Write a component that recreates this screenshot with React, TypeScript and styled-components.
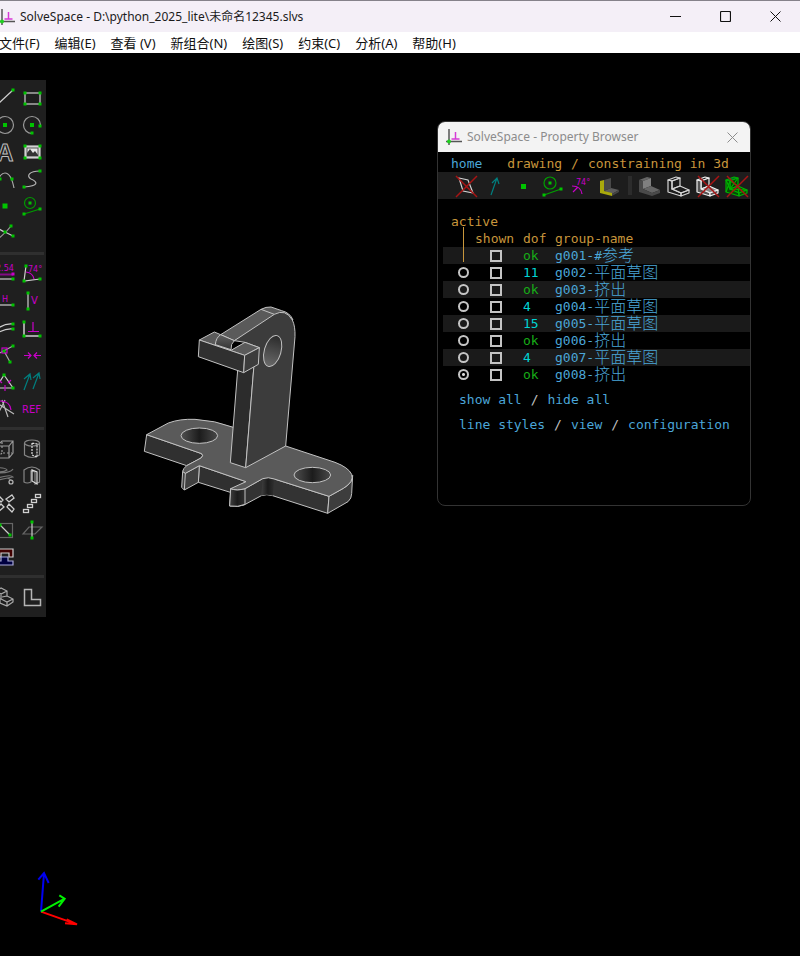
import React from "react";
import styled, { createGlobalStyle, css } from "styled-components";

const WHITE = "#cfcfcf";
const GREEN = "#00c400";
const MAGENTA = "#c800c8";
const TEAL = "#007f7f";
const RED = "#a81414";
const LINK = "#4ba6d8";
const AMBER = "#c8963c";

const GlobalStyle = createGlobalStyle`
  * { box-sizing: border-box; }
  body { margin: 0; background: #000; }
  button, input, table { font: inherit; color: inherit; }
`;

const AppWindow = styled.div`
  display: flex;
  flex-direction: column;
  min-height: 100vh;
  overflow: hidden;
  background: #000;
  font-family: "Noto Sans", "Noto Sans CJK SC", sans-serif;
  font-size: 12px;
`;

const TitleBar = styled.header`
  display: flex;
  align-items: center;
  height: 32px;
  border-top: 1px solid #85828a;
  background: #f4eff7;
  color: #1b1b1b;
`;

const AppMark = styled.svg`
  flex: none;
  width: 18px;
  height: 18px;
  margin-left: -2px;
`;

const WindowTitle = styled.h1`
  flex: 1;
  margin: 0 0 0 4px;
  font-size: 12px;
  font-weight: 400;
  line-height: 16px;
  white-space: nowrap;
`;

const PlainButton = styled.button`
  display: flex;
  align-items: center;
  justify-content: center;
  padding: 0;
  border: 0;
  background: none;
`;

const WindowControl = styled(PlainButton)`
  width: 50px;
  height: 31px;
`;

const MenuBar = styled.nav`
  display: flex;
  align-items: center;
  gap: 15px;
  height: 21px;
  margin-left: -1px;
  background: #fff;
  color: #111;
  font-size: 13px;
`;

const MenuItem = styled(PlainButton)`
  line-height: 20px;
  white-space: nowrap;
`;

const Canvas = styled.main`
  position: relative;
  display: flex;
  align-items: flex-start;
  flex: 1;
  padding-top: 27px;
  background: #000;
`;

const ToolPalette = styled.aside`
  display: flex;
  flex-direction: column;
  gap: 5px;
  width: 54px;
  margin-left: -8px;
  padding: 5px 0 7px;
  background: #1f1f1f;
`;

const ToolGroup = styled.div`
  display: grid;
  grid-template-columns: 27px 27px;
  grid-auto-rows: 27px;
`;

const PaletteRule = styled.hr`
  width: 52px;
  height: 3px;
  margin: 0;
  border: 0;
  background: #2f2f2f;
`;

const ToolButton = styled(PlainButton)`
  width: 27px;
  height: 27px;
`;

const IconSvg = styled.svg`
  display: block;
  width: 27px;
  height: 27px;
  fill: none;
  stroke: ${WHITE};
  stroke-width: 1.2;
  font-family: "DejaVu Sans", sans-serif;
`;

const ModelDrawing = styled.svg`
  position: absolute;
  left: 135px;
  top: 242px;
  width: 230px;
  height: 225px;
`;

const AxesDrawing = styled.svg`
  position: absolute;
  left: 20px;
  bottom: 0;
  width: 80px;
  height: 96px;
`;

const Browser = styled.section`
  position: absolute;
  right: 49px;
  top: 68px;
  width: 314px;
  min-height: 385px;
  overflow: hidden;
  border: 1px solid #333;
  border-radius: 8px;
  background: #000;
  color: ${LINK};
  font-family: "DejaVu Sans Mono", "Noto Sans CJK SC", monospace;
  font-size: 13px;
  line-height: 17px;
`;

const BrowserTitleBar = styled.header`
  display: flex;
  align-items: center;
  height: 30px;
  padding-left: 9px;
  background: #f3f3f3;
  color: #8c8c8c;
  font-family: "Noto Sans", sans-serif;
`;

const BrowserTitle = styled.h2`
  flex: 1;
  margin: 0 0 0 4px;
  font-size: 12px;
  font-weight: 400;
  line-height: 16px;
`;

const CloseButton = styled(PlainButton)`
  width: 36px;
  height: 30px;
`;

const Crumbs = styled.div`
  display: flex;
  align-items: center;
  gap: 9px;
  height: 20px;
  padding: 2px 0 0 13px;
  color: ${AMBER};
  white-space: nowrap;
`;

const TextLink = styled.a`
  color: ${LINK};
  text-decoration: none;
`;

const HomeLink = styled(TextLink)`
  margin-right: 16px;
`;

const IconStrip = styled.div`
  display: flex;
  gap: 2px;
  height: 27px;
  padding-left: 14px;
  background: #1d1d1d;
`;

const StripRule = styled.span`
  width: 4px;
  height: 19px;
  margin: 4px 2px;
  background: #2c2c2c;
`;

const GroupTable = styled.table`
  width: calc(100% - 5px);
  margin: 14px 0 0 5px;
  border-collapse: collapse;
  table-layout: fixed;
`;

const Cell = styled.td<{ $inset?: number; $width?: number }>`
  width: ${(p) => (p.$width ? `${p.$width}px` : "auto")};
  height: 17px;
  padding: 0 0 0 ${(p) => p.$inset ?? 0}px;
  line-height: 17px;
  vertical-align: middle;
  white-space: nowrap;
`;

const HeadCell = styled(Cell).attrs({ as: "th" })`
  position: relative;
  color: ${AMBER};
  font-weight: 400;
  text-align: left;
`;

const ActiveCell = styled(HeadCell)`
  &::after {
    content: "";
    position: absolute;
    left: 20px;
    top: 14px;
    width: 1px;
    height: 35px;
    background: ${AMBER};
  }
`;

const GroupRow = styled.tr<{ $striped: boolean }>`
  background: ${(p) => (p.$striped ? "#1a1a1a" : "transparent")};
`;

const markStyle = css`
  display: block;
  appearance: none;
  margin: 0;
  border: 2px solid #c4c4c4;
`;

const ActiveRadio = styled.input`
  ${markStyle}
  width: 11px;
  height: 11px;
  border-radius: 50%;
  &:checked {
    background: radial-gradient(circle, #d8d8d8 0 1px, transparent 2px);
  }
`;

const ShownBox = styled.input`
  ${markStyle}
  width: 12px;
  height: 12px;
`;

const Dof = styled.span<{ $ok: boolean }>`
  color: ${(p) => (p.$ok ? "#17ad17" : "#00d3d3")};
`;

const GroupLink = styled(TextLink)`
  display: flex;
  align-items: center;
  height: 17px;
`;

const WideGlyphs = styled.span`
  font-size: 16px;
  font-weight: 300;
  line-height: 17px;
`;

const LinkRow = styled.div`
  display: flex;
  gap: 9px;
  margin: 8px 0 0 21px;
  color: #c0c0c0;
  white-space: nowrap;
`;

type DotProps = { x: number; y: number; c?: string; s?: number };
const Dot = ({ x, y, c = GREEN, s = 3 }: DotProps) => (
  <rect x={x - s / 2} y={y - s / 2} width={s} height={s} fill={c} stroke="none" />
);

const Cross = () => <path d="M4 4L25 25M25 4L4 25" stroke={RED} strokeWidth="1.5" />;

const Label = ({ x, y, size = 8, children }: { x: number; y: number; size?: number; children: string }) => (
  <text x={x} y={y} fontSize={size} fill={MAGENTA} stroke="none">
    {children}
  </text>
);

const Bracket = ({ top, side, front, seat, line }: { top: string; side: string; front: string; seat: string; line: string }) => (
  <g stroke={line} strokeWidth="1.2" strokeLinejoin="round">
    <path d="M3 8L11 5L15 6L7 9Z" fill={top} />
    <path d="M7 9L15 6V14L7 17Z" fill={front} />
    <path d="M7 17L15 14L24 18L16 21Z" fill={seat} />
    <path d="M3 8L7 9V17L16 21V24L3 20Z" fill={side} />
    <path d="M16 21L24 18V21L16 24Z" fill={side} />
  </g>
);

type Tool = { name: string; art?: React.ReactNode };

const paletteGroups: Tool[][] = [
  [
    { name: "Line segment", art: <><path d="M5 20L21 5" /><Dot x={21} y={5} /><Dot x={5} y={20} /></> },
    { name: "Rectangle", art: <><rect x="6" y="8" width="15" height="11" /><Dot x={6} y={8} /><Dot x={21} y={8} /><Dot x={6} y={19} /><Dot x={21} y={19} /></> },
    { name: "Circle", art: <><circle cx="13" cy="13" r="8.5" stroke="#9a9a9a" /><Dot x={13} y={13} s={4} /></> },
    { name: "Arc", art: <><path d="M21.5 13A8.5 8.5 0 1 0 13 21.5" stroke="#9a9a9a" /><Dot x={13} y={13} s={4} /><Dot x={21} y={14} /><Dot x={13} y={21} /></> },
    { name: "Text", art: <text x="13" y="22" fontSize="23" fontWeight="700" textAnchor="middle" fontFamily="Liberation Sans" stroke="#bdbdbd" strokeWidth="1">A</text> },
    { name: "Image", art: <><rect x="6" y="7" width="15" height="12" fill="#d6d6d6" /><rect x="8" y="9" width="11" height="8" fill="#e6e6e6" stroke="#555" strokeWidth="1" /><path d="M8 17V14L11 10L14 14L16 12L19 16V17Z" fill="#333" stroke="none" /><Dot x={6} y={7} /><Dot x={21} y={7} /><Dot x={6} y={19} /><Dot x={21} y={19} /></> },
    { name: "Tangent arc", art: <><path d="M4 21C6 12 9 7 13 7S20 12 22 22" stroke="#aaa" /><Dot x={8} y={13} /><Dot x={20} y={13} /></> },
    { name: "Bezier spline", art: <><path d="M21 5C10 5 7 10 12 13C19 16 20 20 5 21" stroke="#b5b5b5" /><Dot x={21} y={5} /><Dot x={5} y={21} /></> },
    { name: "Point", art: <Dot x={13} y={13} s={5} /> },
    { name: "Construction", art: <g stroke="#009a00"><circle cx="11" cy="10" r="5.5" /><path d="M5 21L21 16" /><Dot x={11} y={10} /><Dot x={5} y={21} /><Dot x={21} y={16} /></g> },
    { name: "Split curves", art: <><path d="M5 20C9 16 14 13 19 6" stroke="#9a9a9a" /><path d="M5 7Q9 11 13 12L21 16" /><Dot x={19} y={6} /><Dot x={21} y={16} /><Dot x={13} y={12} /></> },
    { name: "" },
  ],
  [
    { name: "Distance", art: <><Label x={4} y={11}>2.54</Label><path d="M5 14.5H21" stroke={MAGENTA} strokeWidth="2" opacity="0.6" /><Dot x={21} y={14} c={MAGENTA} /><path d="M5 19H21" /><Dot x={21} y={19} /></> },
    { name: "Angle", art: <><path d="M7 6L5 21L21 19" /><path d="M7 12Q14 13 15 19" stroke={MAGENTA} /><Label x={9} y={12}>74°</Label><Dot x={7} y={6} /><Dot x={5} y={21} /><Dot x={21} y={19} /></> },
    { name: "Horizontal", art: <><Label x={10} y={15}>H</Label><path d="M5 18H21" /><Dot x={21} y={18} /></> },
    { name: "Vertical", art: <><Label x={12} y={17} size={10}>V</Label><path d="M9 6V22" /><Dot x={9} y={6} /><Dot x={9} y={22} /></> },
    { name: "Parallel", art: <><path d="M4 16Q12 9 21 10M4 20Q13 14 21 15" /><Dot x={21} y={10} /><Dot x={21} y={15} /></> },
    { name: "Perpendicular", art: <><path d="M5 8V22H21" strokeWidth="1.5" /><path d="M14 8V17M9 17.5H20" stroke={MAGENTA} /><Dot x={5} y={8} /><Dot x={5} y={22} /><Dot x={21} y={22} /></> },
    { name: "Point on line", art: <><path d="M4 14L21 5M12 10L18 21" stroke="#a8a8a8" /><rect x="10" y="7" width="5" height="5" stroke={MAGENTA} /><Dot x={12} y={10} /><Dot x={21} y={5} /><Dot x={18} y={21} /></> },
    { name: "Symmetric", art: <path d="M5 14.5H12M9 11.5L12 14.5L9 17.5M22 14.5H15M18 11.5L15 14.5L18 17.5" stroke={MAGENTA} /> },
    { name: "Equal", art: <><path d="M12 7L4 20H21Z" /><path d="M6 11L10 15M19 12L16 15M13 17V23" stroke={MAGENTA} /><Dot x={12} y={7} /><Dot x={21} y={20} /></> },
    { name: "Same orientation", art: <path d="M5 22L11 6M5 11L11 6L12 12M14 21L20 5M14 10L20 5L21 11" stroke={TEAL} /> },
    { name: "Other angle", art: <><path d="M10 5L16 22M5 8L22 19M6 19L13 5" stroke="#b8b8b8" /><path d="M8 6Q18 6 19 15" stroke={MAGENTA} /></> },
    { name: "Reference", art: <Label x={3} y={18} size={10}>REF</Label> },
  ],
  [
    { name: "Extrude", art: <g stroke="#999"><path d="M5 11L10 6H21V18L17 23H5ZM5 11H17V23M17 11L21 6" /><path d="M10 7V18H20M10 18L6 22" strokeDasharray="2 2" /></g> },
    { name: "Lathe", art: <g stroke="#858585"><ellipse cx="13" cy="8" rx="7.5" ry="3" /><path d="M5.5 8V20Q13 25 20.5 20V8" /><path d="M13 8V20L18 22V9Z" stroke="#ddd" strokeDasharray="2 1" /></g> },
    { name: "Helical", art: <g stroke="#777"><path d="M4 6Q13 5 15 8Q12 10 6 10M6 11Q19 11 21 7M6 16Q19 12 21 15Q14 16 7 18M16 16L20 19" /><circle cx="19" cy="20" r="2" stroke="#bbb" /></g> },
    { name: "Revolve", art: <g stroke="#858585"><path d="M5 8Q13 2 20.5 8V20L16 22V10L12 9V20Q8 22 5 20Z" /><path d="M13 8V19L18 22V10Z" stroke="#ddd" /></g> },
    { name: "Step rotating", art: <g strokeWidth="1.3"><path d="M6 6L11 11L9 13L4 8ZM20 6L22 9L17 13L14 10ZM6 23L4 20L9 15L12 18ZM20 23L15 18L17 15L22 20Z" /></g> },
    { name: "Step translating", art: <g strokeWidth="1.3"><rect x="4.5" y="20.5" width="5" height="3" /><rect x="8.5" y="15.5" width="5" height="3" /><rect x="12.5" y="10.5" width="5" height="3" /><rect x="16.5" y="5.5" width="5" height="3" /></g> },
    { name: "Sketch in plane", art: <><rect x="5.5" y="7.5" width="15" height="14" stroke="#666" /><path d="M8 9L18 19" /><Dot x={8} y={9} /><Dot x={18} y={19} /></> },
    { name: "Sketch in 3d", art: <><path d="M4 18L10 11H23L16 18Z" stroke="#666" /><path d="M13 6V22" /><Dot x={13} y={6} /><Dot x={13} y={22} /></> },
    { name: "Link", art: <><path d="M5 6H21V14H17V10H9V14H5Z" fill="#400000" /><path d="M9 14H16V18H21V22H5V18H9Z" fill="#000040" stroke="#a9a9d9" /></> },
    { name: "" },
  ],
  [
    { name: "Nearest isometric", art: <path d="M4 8L9 5L15 8V13L21 16V19L15 23L8 20V16L4 13ZM4 8L9 11L15 8M9 11V16L15 19L21 16M15 19V23M10 14L15 13" stroke="#aaa" /> },
    { name: "Nearest orthographic", art: <path d="M5.5 6.5H12.5V16.5H21.5V22.5H5.5Z" stroke="#b5b5b5" strokeWidth="1.5" /> },
  ],
];

const viewTools: Tool[] = [
  { name: "Show workplanes", art: <><path d="M7 6L16 8L21 21L11 19Z" /><Cross /></> },
  { name: "Show normals", art: <path d="M10 23L16 6M11 11L16 6L18 12" stroke={TEAL} /> },
  { name: "Show points", art: <Dot x={13.5} y={14.5} s={5} /> },
  { name: "Show construction", art: <g stroke="#00a000"><circle cx="11" cy="11" r="6" /><path d="M5 23L22 17" /><Dot x={11} y={11} /><Dot x={5} y={23} /><Dot x={22} y={17} /></g> },
  { name: "Show constraints", art: <><Label x={8} y={13}>74°</Label><path d="M4 14Q13 14 14 22M5 20L10 15" stroke={MAGENTA} /></> },
  {
    name: "Highlight faces",
    art: (
      <g stroke="none">
        <path d="M7 8L14 6V16L7 19Z" fill="#484848" />
        <path d="M7 19L14 16L22 18L15 22Z" fill="#5c5c5c" />
        <path d="M15 22L22 18V20L15 24Z" fill="#444" />
        <path d="M3 9L7 8V19L15 21V24L3 21Z" fill="#a9a90c" />
      </g>
    ),
  },
];

const renderTools: Tool[] = [
  { name: "Show shaded", art: <Bracket top="#666" side="#4a4a4a" front="#808080" seat="#666" line="none" /> },
  { name: "Show edges", art: <Bracket top="none" side="none" front="none" seat="none" line="#d5d5d5" /> },
  { name: "Show outlines", art: <><Bracket top="#222" side="#555" front="#222" seat="#888" line="#f0f0f0" /><Cross /></> },
  { name: "Show mesh", art: <><Bracket top="#063" side="#064a06" front="#063806" seat="#064a06" line="#00b000" /><path d="M3 8L7 17L15 6M3 20L7 9L15 14M7 17L24 18M16 24L15 14" stroke="#00b000" /><Cross /></> },
];

const menus = ["文件(F)", "编辑(E)", "查看 (V)", "新组合(N)", "绘图(S)", "约束(C)", "分析(A)", "帮助(H)"];

const groups = [
  { code: "g001-#", title: "参考", dof: "ok" },
  { code: "g002-", title: "平面草图", dof: "11" },
  { code: "g003-", title: "挤出", dof: "ok" },
  { code: "g004-", title: "平面草图", dof: "4" },
  { code: "g005-", title: "平面草图", dof: "15" },
  { code: "g006-", title: "挤出", dof: "ok" },
  { code: "g007-", title: "平面草图", dof: "4" },
  { code: "g008-", title: "挤出", dof: "ok" },
];

const Tools = ({ tools }: { tools: Tool[] }) => (
  <>
    {tools.filter((t) => t.name).map((t) => (
      <ToolButton key={t.name} type="button" aria-label={t.name}>
        <IconSvg viewBox="0 0 27 27" aria-hidden="true">{t.art}</IconSvg>
      </ToolButton>
    ))}
  </>
);

const Mark = () => (
  <AppMark viewBox="0 0 18 18" aria-hidden="true" fill="none">
    <path d="M4 1V17M1 13.5H17" stroke="#555" strokeWidth="1.5" />
    <path d="M10.5 4V11M6.5 11H14.5" stroke="#d63ad6" strokeWidth="1.5" />
    <circle cx="4" cy="13.5" r="2" fill="#1fd01f" />
  </AppMark>
);

const Model = () => (
  <ModelDrawing viewBox="0 0 690 675" role="img" aria-label="Bracket model">
    <defs>
      <linearGradient id="bore" x1="0" x2="1"><stop offset="0" stopColor="#505050" /><stop offset="0.5" stopColor="#1c1c1c" /><stop offset="1" stopColor="#484848" /></linearGradient>
      <linearGradient id="sideBore" x1="0" x2="0" y1="0" y2="1"><stop offset="0" stopColor="#2a2a2a" /><stop offset="1" stopColor="#6a6a6a" /></linearGradient>
      <linearGradient id="fillet" x1="0" x2="1"><stop offset="0" stopColor="#404040" /><stop offset="0.5" stopColor="#1c1c1c" /><stop offset="1" stopColor="#303030" /></linearGradient>
      <linearGradient id="nub" x1="0" x2="0" y1="0" y2="1"><stop offset="0" stopColor="#606060" /><stop offset="1" stopColor="#333" /></linearGradient>
    </defs>
    <g stroke="#c2c2c2" strokeWidth="3" strokeLinejoin="round">
      <path d="M35 419L200 476Q207 482 198 489L155 512L28 469Z" fill="#303030" />
      <path d="M193 512L333 560L286 592L190 562Z" fill="#303030" />
      <path d="M143 529L151 535L193 512L190 562L148 585L140 577Z" fill="#404040" />
      <path d="M151 535L148 585" fill="none" />
      <path d="M287 581Q305 588 330 581L383 551Q400 545 418 552L582 604L578 655L413 602Q395 596 379 602L327 630Q310 637 284 633Z" fill="#333" />
      <path d="M383 551Q400 545 418 552L413 602Q395 596 379 602Z" fill="url(#fillet)" stroke="none" />
      <path d="M287 581Q305 588 330 581V628Q310 637 284 633Z" fill="url(#fillet)" />
      <path d="M582 604L625 580Q654 564 653 541L650 596Q650 610 639 620L578 655Z" fill="#3d3d3d" />
      <path d="M35 419L100 384Q135 371 180 373Q240 376 295 397L452 453L600 502Q640 517 650 538Q658 560 625 580L582 604L418 552Q400 545 383 551L330 581Q305 588 287 581L333 560L193 512L151 535L143 529Q144 521 155 512L198 489Q207 482 200 476Z" fill="#5a5a5a" />
      <ellipse cx="193" cy="422" rx="55" ry="23" fill="url(#bore)" />
      <ellipse cx="532" cy="540" rx="55" ry="23" fill="url(#bore)" />
      <path d="M308 225L357 210L332 518L286 503Z" fill="#2c2c2c" />
      <path d="M257 119L378 43Q393 35 408 36L440 47Q465 53 474 75L450 60L298 137Z" fill="#5a5a5a" />
      <path d="M298 137L418 58Q452 40 472 75Q481 93 480 125L452 453L332 518L357 210L373 158L330 142Z" fill="#3c3c3c" />
      <path d="M378 43L418 58" fill="none" />
      <ellipse cx="413" cy="168" rx="25" ry="48" transform="rotate(16 413 168)" fill="url(#sideBore)" />
      <path d="M193 135L238 111L257 119L241 149L288 166L330 142L373 158L329 181Z" fill="#5a5a5a" />
      <path d="M241 149Q243 127 257 119L298 137Q287 146 288 164Z" fill="url(#nub)" />
      <path d="M193 135L329 181L326 233L190 185Z" fill="#303030" />
      <path d="M329 181L373 158L370 208L326 233Z" fill="#3c3c3c" />
    </g>
  </ModelDrawing>
);

const Axes = () => (
  <AxesDrawing viewBox="0 0 240 288" role="img" aria-label="Axes" fill="none" strokeWidth="6">
    <path d="M63 155L72 40M55 59L72 39L86 69" stroke="#0000f0" />
    <path d="M63 155L171 193M140 178L171 193L135 190" stroke="#f00" />
    <path d="M63 155L134 116M118 106L134 116L116 140" stroke="#00f000" />
  </AxesDrawing>
);

const PropertyBrowser = () => (
  <Browser aria-label="Property Browser">
    <BrowserTitleBar>
      <Mark />
      <BrowserTitle>SolveSpace - Property Browser</BrowserTitle>
      <CloseButton type="button" aria-label="Close property browser">
        <svg width="11" height="11" viewBox="0 0 11 11" stroke="#8c8c8c"><path d="M0.5 0.5L10.5 10.5M10.5 0.5L0.5 10.5" /></svg>
      </CloseButton>
    </BrowserTitleBar>
    <Crumbs>
      <HomeLink href="#home">home</HomeLink>
      <span>drawing</span>
      <span>/</span>
      <span>constraining in 3d</span>
    </Crumbs>
    <IconStrip>
      <Tools tools={viewTools} />
      <StripRule />
      <Tools tools={renderTools} />
    </IconStrip>
    <GroupTable>
      <thead>
        <tr>
          <ActiveCell $width={32} $inset={8}>active</ActiveCell>
          <HeadCell $width={48} />
          <HeadCell $width={32} />
          <HeadCell />
        </tr>
        <tr>
          <HeadCell />
          <HeadCell>shown</HeadCell>
          <HeadCell>dof</HeadCell>
          <HeadCell>group-name</HeadCell>
        </tr>
      </thead>
      <tbody>
        {groups.map((g, i) => (
          <GroupRow key={g.code} $striped={i % 2 === 0}>
            <Cell $inset={15}>
              {i > 0 && <ActiveRadio type="radio" name="active" defaultChecked={i === 7} aria-label={`Activate ${g.code}${g.title}`} />}
            </Cell>
            <Cell $inset={15}>
              <ShownBox type="checkbox" aria-label={`Show ${g.code}${g.title}`} />
            </Cell>
            <Cell>
              <Dof $ok={g.dof === "ok"}>{g.dof}</Dof>
            </Cell>
            <Cell>
              <GroupLink href={`#${g.code}`}>
                {g.code}
                <WideGlyphs>{g.title}</WideGlyphs>
              </GroupLink>
            </Cell>
          </GroupRow>
        ))}
      </tbody>
    </GroupTable>
    <footer>
      <LinkRow>
        <TextLink href="#show-all">show all</TextLink>
        <span>/</span>
        <TextLink href="#hide-all">hide all</TextLink>
      </LinkRow>
      <LinkRow>
        <TextLink href="#line-styles">line styles</TextLink>
        <span>/</span>
        <TextLink href="#view">view</TextLink>
        <span>/</span>
        <TextLink href="#configuration">configuration</TextLink>
      </LinkRow>
    </footer>
  </Browser>
);

export default function App() {
  return (
    <AppWindow>
      <GlobalStyle />
      <TitleBar>
        <Mark />
        <WindowTitle>SolveSpace - D:\python_2025_lite\未命名12345.slvs</WindowTitle>
        <WindowControl type="button" aria-label="Minimize">
          <svg width="11" height="11" viewBox="0 0 11 11" stroke="#111"><path d="M0 5.5H11" /></svg>
        </WindowControl>
        <WindowControl type="button" aria-label="Maximize">
          <svg width="11" height="11" viewBox="0 0 11 11" stroke="#111" fill="none"><rect x="0.5" y="0.5" width="10" height="10" rx="1" strokeWidth="1.2" /></svg>
        </WindowControl>
        <WindowControl type="button" aria-label="Close">
          <svg width="11" height="11" viewBox="0 0 11 11" stroke="#111"><path d="M0.5 0.5L10.5 10.5M10.5 0.5L0.5 10.5" /></svg>
        </WindowControl>
      </TitleBar>
      <MenuBar>
        {menus.map((m) => (
          <MenuItem key={m} type="button">{m}</MenuItem>
        ))}
      </MenuBar>
      <Canvas>
        <ToolPalette aria-label="Tools">
          {paletteGroups.map((tools, i) => (
            <React.Fragment key={i}>
              {i > 0 && <PaletteRule />}
              <ToolGroup>
                <Tools tools={tools} />
              </ToolGroup>
            </React.Fragment>
          ))}
        </ToolPalette>
        <Model />
        <Axes />
        <PropertyBrowser />
      </Canvas>
    </AppWindow>
  );
}
